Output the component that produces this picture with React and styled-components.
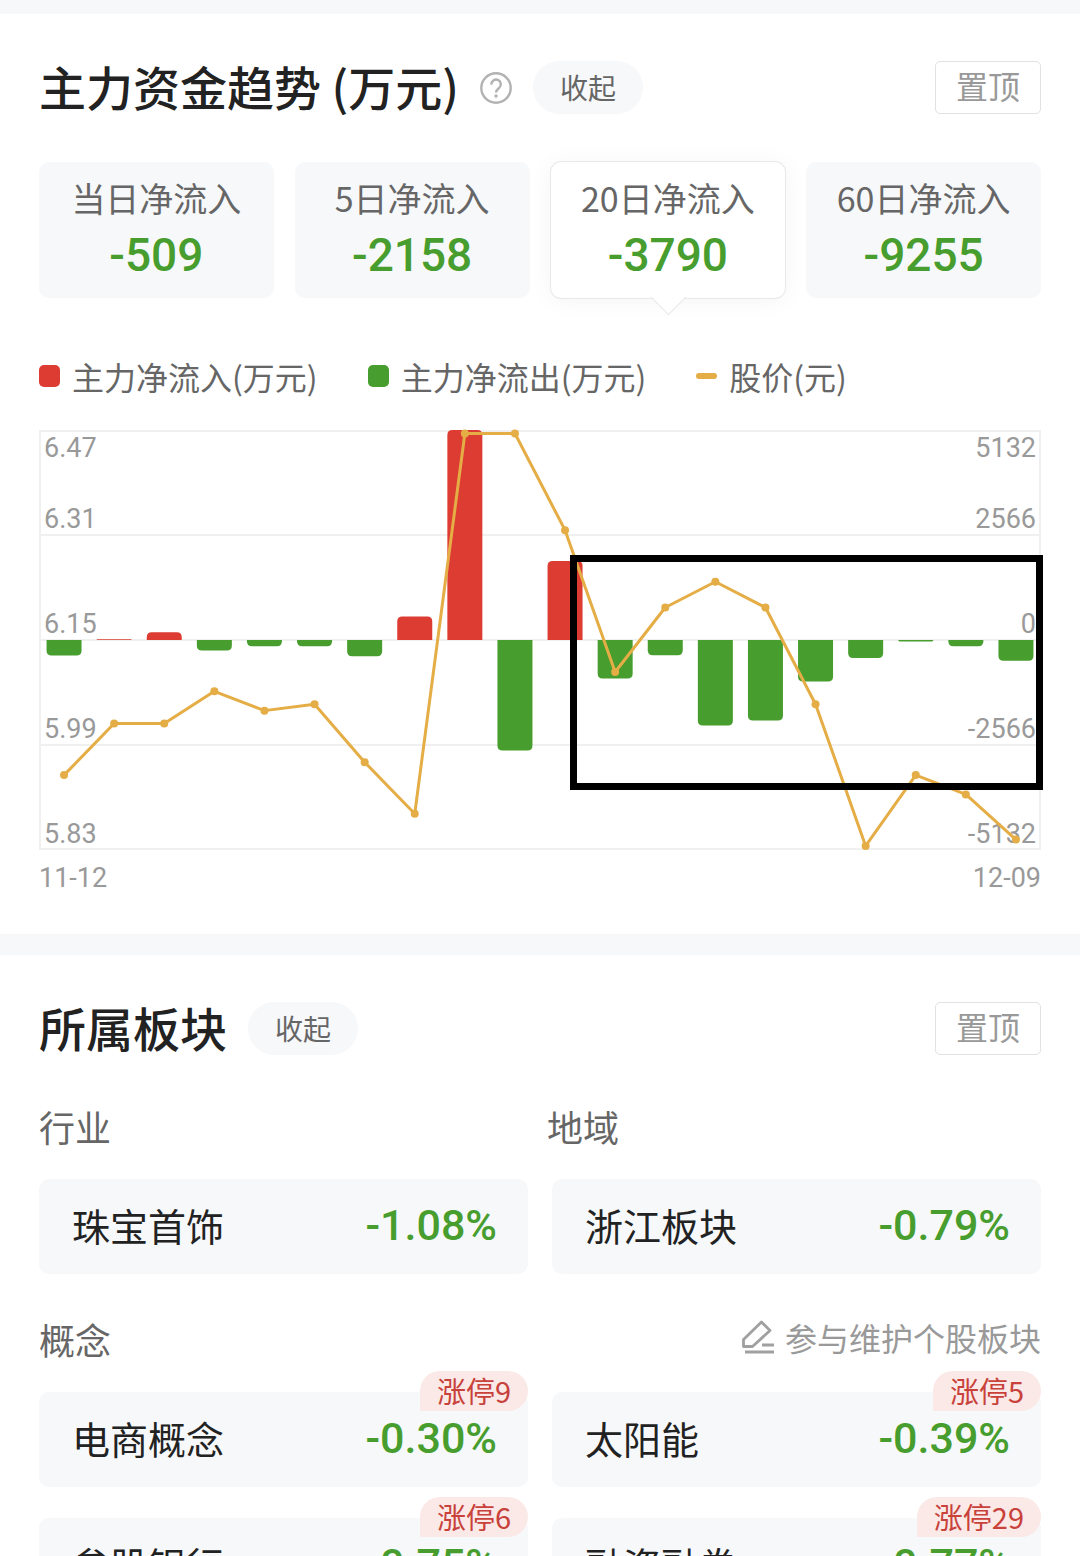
import styled, { createGlobalStyle, css } from "styled-components";

const PERIODS = [
  { label: "当日净流入", value: "-509" },
  { label: "5日净流入", value: "-2158" },
  { label: "20日净流入", value: "-3790", active: true },
  { label: "60日净流入", value: "-9255" },
];

const FLOWS = [
  -380, 20, 190, -255, -155, -155, -395, 575, 5132, -2700, 1930, -940, -370,
  -2090, -1970, -1015, -440, -35, -155, -505,
];

const PRICES = [
  5.94, 6.02, 6.02, 6.07, 6.04, 6.05, 5.96, 5.88, 6.47, 6.47, 6.32, 6.1, 6.2,
  6.24, 6.2, 6.05, 5.83, 5.94, 5.91, 5.84,
];

const AXIS = [
  { price: "6.47", flow: "5132" },
  { price: "6.31", flow: "2566" },
  { price: "6.15", flow: "0" },
  { price: "5.99", flow: "-2566" },
  { price: "5.83", flow: "-5132" },
];

const CONCEPTS = [
  { name: "电商概念", change: "-0.30%", tag: "涨停9" },
  { name: "太阳能", change: "-0.39%", tag: "涨停5" },
  { name: "参股银行", change: "-0.75%", tag: "涨停6" },
  { name: "融资融券", change: "-0.77%", tag: "涨停29" },
];

const CHART_W = 1002;
const CHART_H = 420;
const STEP = CHART_W / FLOWS.length;
const ZERO = CHART_H / 2;

const centerX = (i) => STEP * (i + 0.5);
const priceY = (p) => 3.5 + (6.47 - p) * 644.5;

const barPath = (value, i) => {
  const h = (Math.abs(value) / 5132) * ZERO;
  const r = Math.min(5, h);
  const s = value > 0 ? -1 : 1;
  const l = centerX(i) - 17.5;
  const e = l + 35;
  const end = ZERO + s * h;
  return `M${l} ${ZERO}V${end - s * r}Q${l} ${end} ${l + r} ${end}H${e - r}Q${e} ${end} ${e} ${end - s * r}V${ZERO}Z`;
};

const FlowChart = () => (
  <Chart viewBox={`0 0 ${CHART_W} ${CHART_H}`} role="img" aria-label="主力资金趋势">
    <g stroke="#f0f0f0" strokeWidth="2" fill="none">
      <rect x="1" y="1" width={CHART_W - 2} height={CHART_H - 2} />
      {[105, 210, 315].map((y) => (
        <line key={y} x1="0" x2={CHART_W} y1={y} y2={y} />
      ))}
    </g>
    {AXIS.map(({ price, flow }, i) => {
      const y = i === 0 ? 27 : i * 105 - 7;
      return (
        <g key={price}>
          <text x="5" y={y}>
            {price}
          </text>
          <text x="997" y={y} textAnchor="end">
            {flow}
          </text>
        </g>
      );
    })}
    {FLOWS.map((value, i) => (
      <path key={i} d={barPath(value, i)} fill={value > 0 ? "#dd3c32" : "#479d2d"} />
    ))}
    <polyline
      points={PRICES.map((p, i) => `${centerX(i)},${priceY(p)}`).join(" ")}
      fill="none"
      stroke="#e5ad45"
      strokeWidth="3"
      strokeLinejoin="round"
    />
    {PRICES.map((p, i) => (
      <circle key={i} cx={centerX(i)} cy={priceY(p)} r="4" fill="#e5ad45" />
    ))}
    <rect x="534.5" y="128.5" width="466" height="228" fill="none" stroke="#000" strokeWidth="7" />
  </Chart>
);

const HelpIcon = () => (
  <svg width="32" height="32" viewBox="0 0 32 32" fill="none" stroke="#b2b2b2" strokeWidth="2.4">
    <circle cx="16" cy="16" r="14.7" />
    <path d="M11.4 12.6a4.7 4.7 0 1 1 7.700 3.300c-1.900 1.500-3 2.200-3 4.500" />
    <circle cx="16" cy="24" r="1.7" fill="#b2b2b2" stroke="none" />
  </svg>
);

const EditIcon = () => (
  <svg width="34" height="34" viewBox="0 0 34 34" fill="none" stroke="#a0a0a0" strokeWidth="2.8">
    <path d="M2.500 19.500 20.500 2l8.500 8.500L11.500 26.500h-9z" strokeLinejoin="round" />
    <path d="M21 25H33M4 32H33" />
  </svg>
);

const Board = ({ name, change, tag }) => (
  <BoardCard href="#">
    <span>{name}</span>
    <Change>{change}</Change>
    {tag && <Tag>{tag}</Tag>}
  </BoardCard>
);

const App = () => {
  return (
    <>
      <GlobalStyle />
      <Page>
        <Section>
          <Header>
            <Title>主力资金趋势 (万元)</Title>
            <HelpButton aria-label="说明">
              <HelpIcon />
            </HelpButton>
            <Pill>收起</Pill>
            <PinButton>置顶</PinButton>
          </Header>
          <Periods>
            {PERIODS.map(({ label, value, active }) => (
              <Period key={label} $active={active} aria-pressed={!!active}>
                <PeriodLabel>{label}</PeriodLabel>
                <PeriodValue>{value}</PeriodValue>
              </Period>
            ))}
          </Periods>
          <Legend>
            <LegendItem $color="#dd3c32">主力净流入(万元)</LegendItem>
            <LegendItem $color="#479d2d">主力净流出(万元)</LegendItem>
            <LegendItem $color="#e5ad45" $line>
              股价(元)
            </LegendItem>
          </Legend>
          <FlowChart />
          <Dates>
            <span>11-12</span>
            <span>12-09</span>
          </Dates>
        </Section>
        <Section>
          <Header>
            <Title>所属板块</Title>
            <Pill>收起</Pill>
            <PinButton>置顶</PinButton>
          </Header>
          <Labels>
            <Label>行业</Label>
            <Label>地域</Label>
          </Labels>
          <Boards>
            <Board name="珠宝首饰" change="-1.08%" />
            <Board name="浙江板块" change="-0.79%" />
          </Boards>
          <ConceptHead>
            <Label>概念</Label>
            <EditLink href="#">
              <EditIcon />
              参与维护个股板块
            </EditLink>
          </ConceptHead>
          <Boards>
            {CONCEPTS.map((item) => (
              <Board key={item.name} {...item} />
            ))}
          </Boards>
        </Section>
      </Page>
    </>
  );
};
export default App;

const GlobalStyle = createGlobalStyle`
  * {
    box-sizing: border-box;
  }
  html {
    scrollbar-width: none;
  }
  body {
    margin: 0;
    background: #f7f8fa;
    color: #222;
    font-family: "Noto Sans CJK SC", sans-serif;
  }
  button {
    padding: 0;
    border: 0;
    background: none;
    font-family: inherit;
    cursor: pointer;
  }
  a {
    color: inherit;
    text-decoration: none;
  }
`;

const numeric = css`
  font-family: Roboto, "Noto Sans CJK SC", sans-serif;
`;

const Page = styled.main`
  display: flex;
  flex-direction: column;
  gap: 21px;
  padding-top: 14px;
`;

const Section = styled.section`
  padding: 47px 39px 38px;
  background: #fff;
`;

const Header = styled.header`
  display: flex;
  align-items: center;
  gap: 21px;
  height: 53px;
`;

const Title = styled.h2`
  margin: 0;
  padding-bottom: 4px;
  font-size: 47px;
  font-weight: 500;
  line-height: 53px;
  white-space: nowrap;
`;

const HelpButton = styled.button`
  display: flex;
`;

const Pill = styled.button`
  height: 53px;
  padding: 0 27px 2px;
  border-radius: 27px;
  background: #f7f8fa;
  color: #666;
  font-size: 28px;
  line-height: 50px;
`;

const PinButton = styled.button`
  width: 106px;
  height: 53px;
  margin-left: auto;
  padding-bottom: 5px;
  border: 1px solid #e2e2e2;
  border-radius: 5px;
  color: #999;
  font-size: 32px;
  line-height: 46px;
`;

const Periods = styled.div`
  display: grid;
  grid-template-columns: repeat(4, 1fr);
  gap: 21px;
  margin-top: 48px;
`;

const Period = styled.button`
  position: relative;
  display: flex;
  flex-direction: column;
  align-items: center;
  gap: 12px;
  height: 136px;
  padding-top: 16px;
  border-radius: 10px;
  background: #f7f8fa;

  ${({ $active }) =>
    $active &&
    css`
      background: #fff;
      box-shadow: 0 0 0 1px #e9e9e9, 0 2px 24px rgba(0, 0, 0, 0.05);

      &::after {
        content: "";
        position: absolute;
        left: 50%;
        bottom: -12px;
        width: 24px;
        height: 24px;
        margin-left: -12px;
        border: solid #e9e9e9;
        border-width: 0 1px 1px 0;
        background: linear-gradient(135deg, transparent 50%, #fff 50%);
        transform: rotate(45deg);
      }
    `}
`;

const PeriodLabel = styled.span`
  color: #666;
  font-size: 34px;
  line-height: 40px;
`;

const PeriodValue = styled.span`
  ${numeric}
  color: #479d2d;
  font-size: 46px;
  font-weight: 500;
  line-height: 50px;
`;

const Legend = styled.div`
  display: flex;
  gap: 50px;
  margin-top: 58px;
`;

const LegendItem = styled.span`
  display: flex;
  align-items: center;
  gap: 12px;
  color: #666;
  font-size: 32px;
  line-height: 40px;

  &::before {
    content: "";
    width: 21px;
    height: ${({ $line }) => ($line ? "6px" : "22px")};
    border-radius: ${({ $line }) => ($line ? "3px" : "5px")};
    background: ${({ $color }) => $color};
  }
`;

const Chart = styled.svg`
  display: block;
  width: 100%;
  margin-top: 34px;
  overflow: visible;

  text {
    ${numeric}
    fill: #999;
    font-size: 27px;
  }
`;

const Dates = styled.div`
  ${numeric}
  display: flex;
  justify-content: space-between;
  margin-top: 10px;
  color: #999;
  font-size: 27px;
  line-height: 36px;
`;

const Labels = styled.div`
  display: grid;
  grid-template-columns: 1fr 1fr;
  gap: 14px;
  margin-top: 49px;
`;

const Label = styled.h3`
  margin: 0;
  color: #666;
  font-size: 36px;
  font-weight: 400;
  line-height: 44px;
`;

const ConceptHead = styled.div`
  display: flex;
  align-items: flex-start;
  justify-content: space-between;
  margin-top: 43px;
`;

const EditLink = styled.a`
  display: flex;
  align-items: center;
  gap: 10px;
  color: #999;
  font-size: 32px;
  line-height: 40px;
`;

const Boards = styled.div`
  display: grid;
  grid-template-columns: 1fr 1fr;
  gap: 31px 24px;
  margin-top: 31px;
`;

const BoardCard = styled.a`
  position: relative;
  display: flex;
  align-items: center;
  justify-content: space-between;
  height: 95px;
  padding: 0 31px 4px 33px;
  border-radius: 10px;
  background: #f7f8fa;
  font-size: 38px;
`;

const Change = styled.span`
  ${numeric}
  color: #479d2d;
  font-size: 43px;
  font-weight: 500;
`;

const Tag = styled.span`
  position: absolute;
  top: -21px;
  right: 0;
  height: 40px;
  padding: 0 17px;
  border-radius: 20px 20px 20px 0;
  background: #fae9e7;
  color: #c8413a;
  font-size: 29px;
  line-height: 39px;
`;
